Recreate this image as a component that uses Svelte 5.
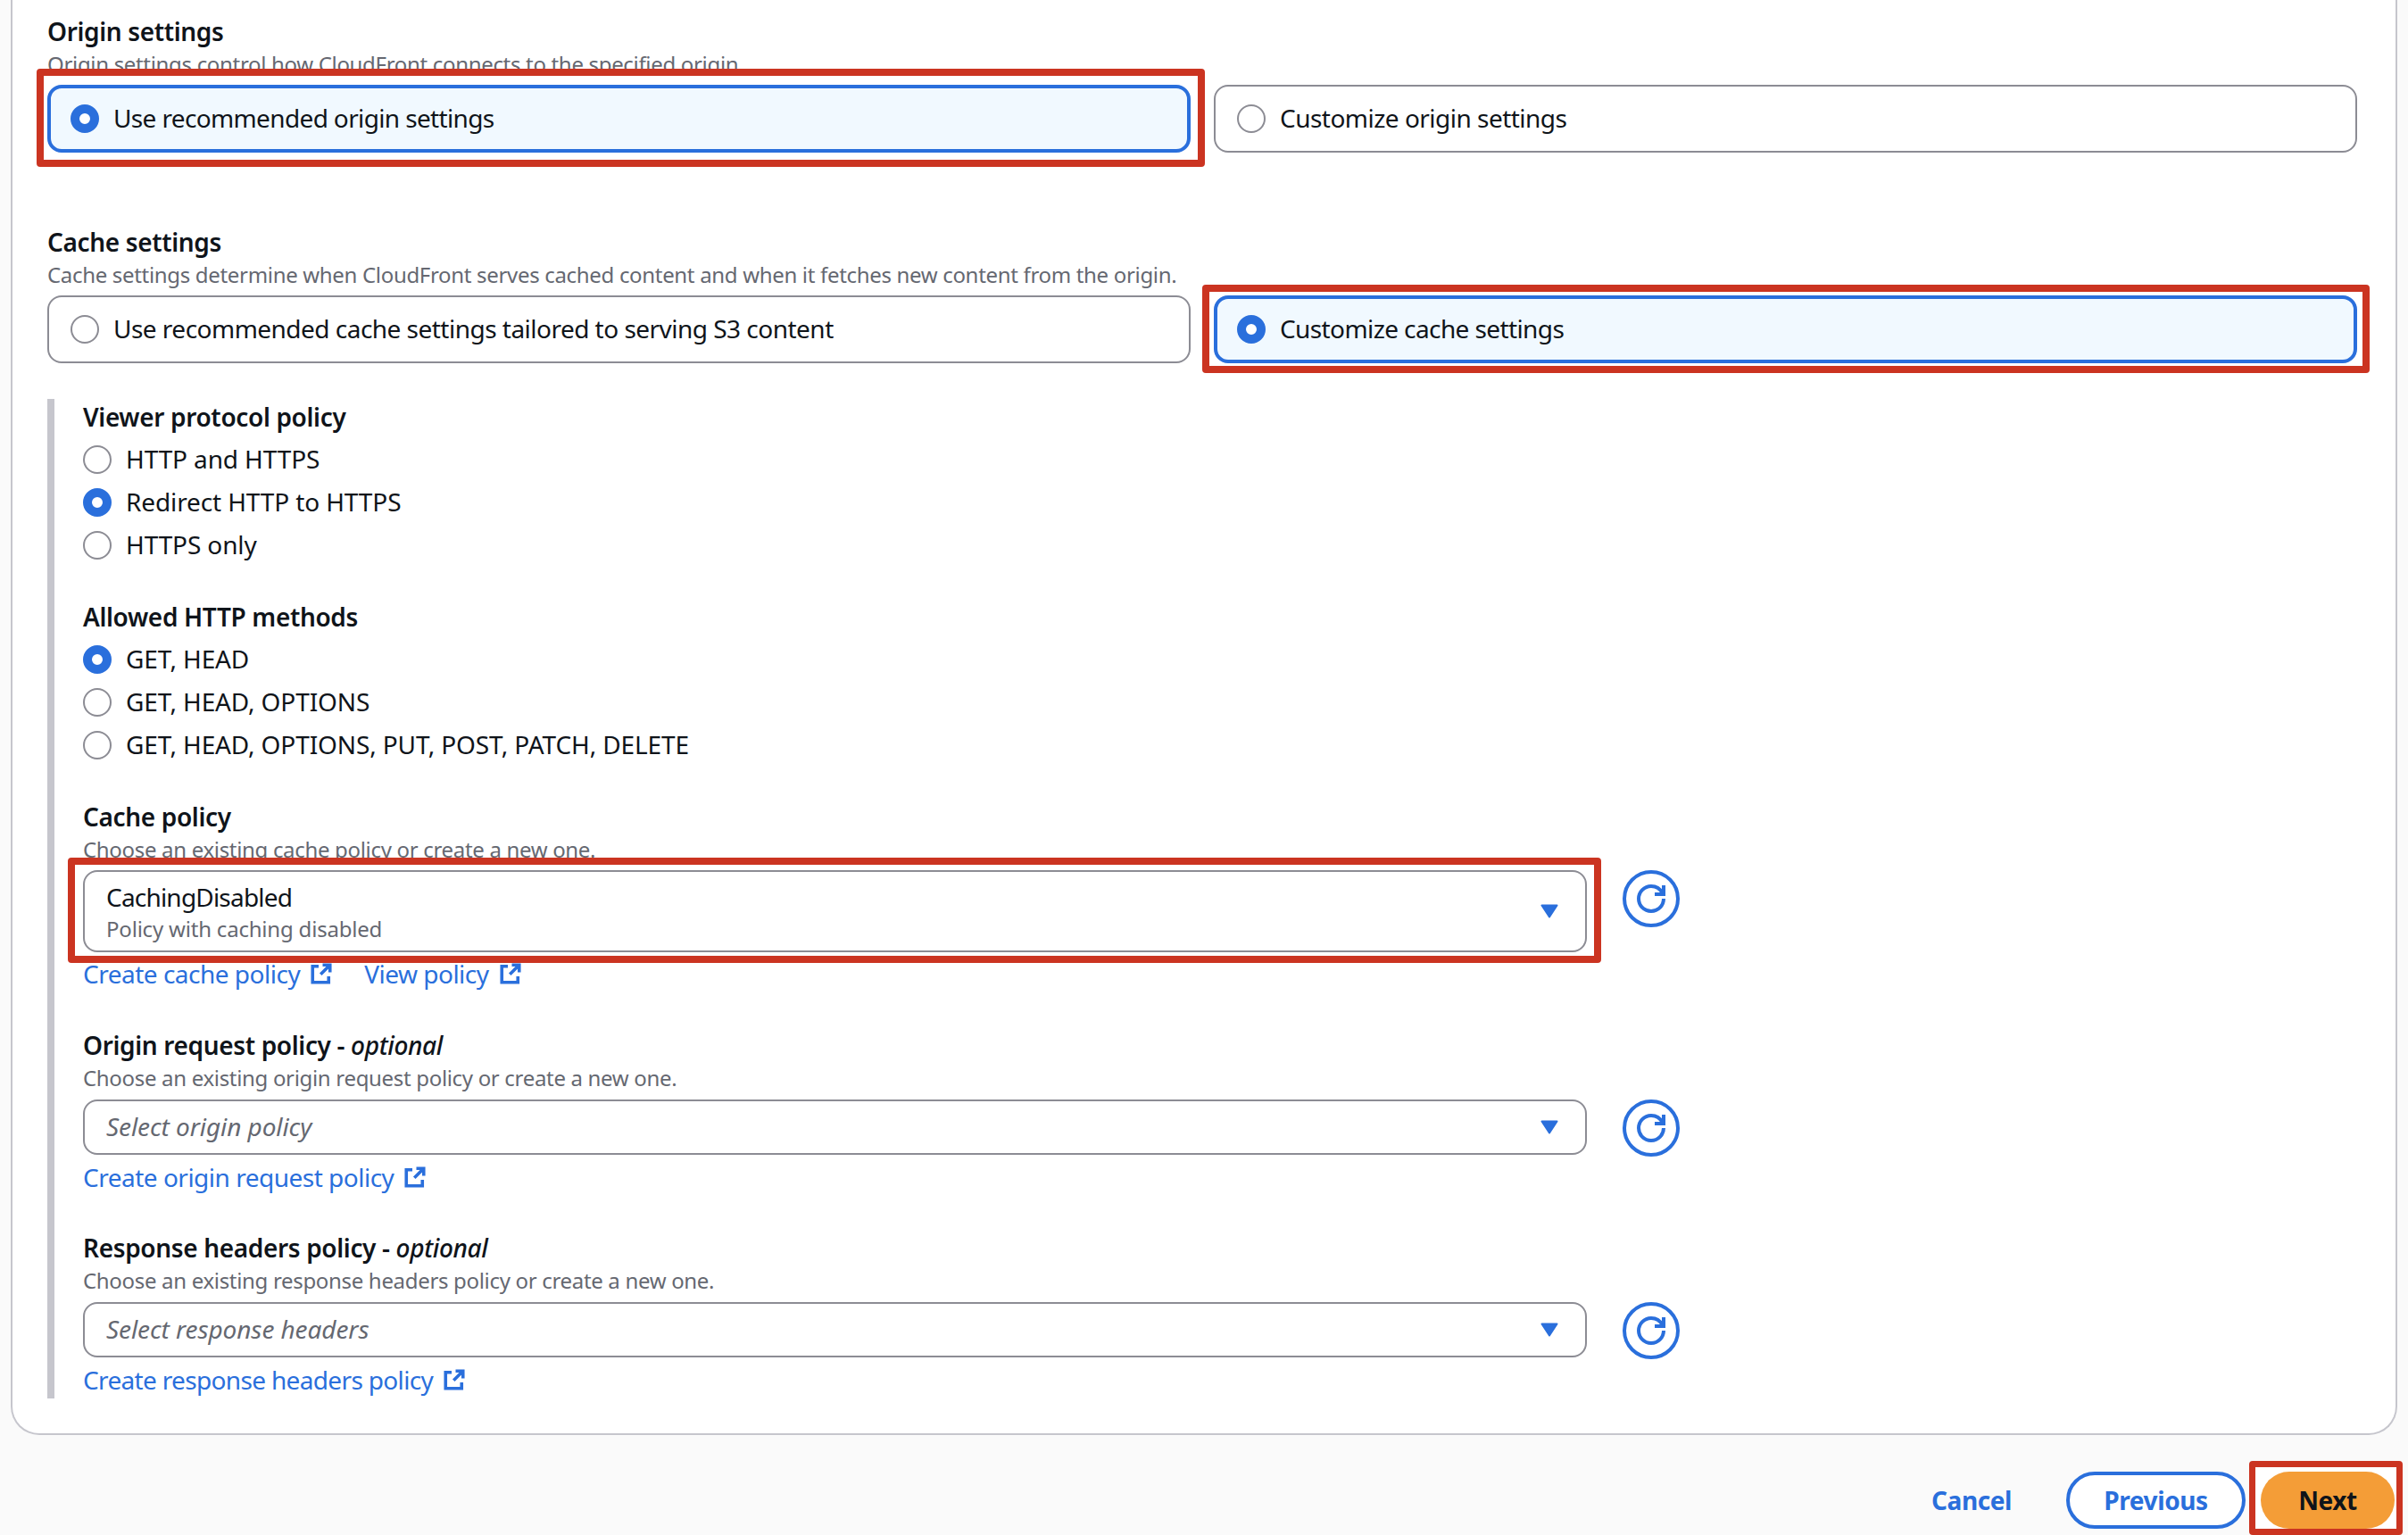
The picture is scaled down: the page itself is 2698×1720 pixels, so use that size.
<script>
  const viewer = [
    { label: 'HTTP and HTTPS' },
    { label: 'Redirect HTTP to HTTPS', checked: true },
    { label: 'HTTPS only' }
  ];
  const methods = [
    { label: 'GET, HEAD', checked: true },
    { label: 'GET, HEAD, OPTIONS' },
    { label: 'GET, HEAD, OPTIONS, PUT, POST, PATCH, DELETE' }
  ];
</script>

{#snippet external()}
  <svg class="ext" viewBox="0 0 16 16" aria-hidden="true">
    <path d="M14.5 7V1.5H9M14.5 1.5 7.5 8.5M6 2.5H1.5V14.5h12V10" />
  </svg>
{/snippet}

{#snippet refresh()}
  <button class="refresh" aria-label="Refresh">
    <svg viewBox="0 0 16 16" aria-hidden="true">
      <path d="M15 8c0 3.87-3.13 7-7 7s-7-3.13-7-7 3.13-7 7-7c2.79 0 5.2 1.63 6.33 4" />
      <path d="M15 .5v5h-5" />
    </svg>
  </button>
{/snippet}

{#snippet caret()}
  <svg class="caret" viewBox="0 0 20 16" aria-hidden="true"><path d="M1.5 1.5h17L10 14.5z" /></svg>
{/snippet}

<div class="page">
  <section class="panel">
    <h3 class="title first">Origin settings</h3>
    <p class="desc">Origin settings control how CloudFront connects to the specified origin.</p>
    <div class="tiles">
      <div class="mark mark-origin">
        <label class="tile on"><input type="radio" name="origin" checked /><span>Use recommended origin settings</span></label>
      </div>
      <label class="tile"><input type="radio" name="origin" /><span>Customize origin settings</span></label>
    </div>

    <h3 class="title cache">Cache settings</h3>
    <p class="desc">Cache settings determine when CloudFront serves cached content and when it fetches new content from the origin.</p>
    <div class="tiles">
      <label class="tile"><input type="radio" name="cache" /><span>Use recommended cache settings tailored to serving S3 content</span></label>
      <div class="mark mark-cache">
        <label class="tile on"><input type="radio" name="cache" checked /><span>Customize cache settings</span></label>
      </div>
    </div>

    <div class="nested">
      <h4 class="title">Viewer protocol policy</h4>
      <div class="radios">
        {#each viewer as r}
          <label class="radio"><input type="radio" name="viewer" checked={r.checked} /><span>{r.label}</span></label>
        {/each}
      </div>

      <h4 class="title methods">Allowed HTTP methods</h4>
      <div class="radios">
        {#each methods as r}
          <label class="radio"><input type="radio" name="methods" checked={r.checked} /><span>{r.label}</span></label>
        {/each}
      </div>

      <h4 class="title policy">Cache policy</h4>
      <p class="desc">Choose an existing cache policy or create a new one.</p>
      <div class="field">
        <div class="mark mark-select">
          <div class="select tall">
            <div class="value">
              <span class="main">CachingDisabled</span>
              <span class="sub">Policy with caching disabled</span>
            </div>
            {@render caret()}
          </div>
        </div>
        {@render refresh()}
      </div>
      <div class="links">
        <a href="#cache">Create cache policy {@render external()}</a>
        <a href="#view">View policy {@render external()}</a>
      </div>

      <h4 class="title opt">Origin request policy - <em>optional</em></h4>
      <p class="desc">Choose an existing origin request policy or create a new one.</p>
      <div class="field short">
        <div class="select"><span class="placeholder">Select origin policy</span>{@render caret()}</div>
        {@render refresh()}
      </div>
      <div class="links">
        <a href="#origin">Create origin request policy {@render external()}</a>
      </div>

      <h4 class="title opt2">Response headers policy - <em>optional</em></h4>
      <p class="desc">Choose an existing response headers policy or create a new one.</p>
      <div class="field short">
        <div class="select"><span class="placeholder">Select response headers</span>{@render caret()}</div>
        {@render refresh()}
      </div>
      <div class="links">
        <a class="tight" href="#response">Create response headers policy {@render external()}</a>
      </div>
    </div>
  </section>

  <footer class="actions">
    <button class="link">Cancel</button>
    <button class="normal">Previous</button>
    <div class="mark mark-next"><button class="primary">Next</button></div>
  </footer>
</div>

<style>
  :global(body) {
    margin: 0;
    background: #fafafa;
  }
  .page {
    width: 2698px;
    height: 1720px;
    overflow: hidden;
    font-family: "Noto Sans", "Open Sans", sans-serif;
    color: #0f141a;
    font-size: 28px;
    box-sizing: border-box;
    padding: 0 12px;
  }
  .panel {
    box-sizing: border-box;
    height: 1608px;
    background: #fff;
    border: 2px solid #c6c6cd;
    border-top: 0;
    border-radius: 0 0 32px 32px;
    padding: 18px 42px 0 39px;
  }
  .title {
    margin: 0 0 2px;
    font-size: 28px;
    line-height: 34px;
    font-weight: 600;
    letter-spacing: -0.35px;
  }
  .title em {
    font-weight: 500;
  }
  .title.cache { margin-top: 83px; }
  .title.methods { margin-top: 39px; }
  .title.policy { margin-top: 39px; }
  .title.opt { margin-top: 45px; }
  .title.opt2 { margin-top: 44px; }
  .desc {
    margin: 0 0 5px;
    font-size: 24px;
    line-height: 36px;
    color: #656871;
    letter-spacing: -0.32px;
  }
  .tiles {
    display: grid;
    grid-template-columns: 1281px 1281px;
    gap: 26px;
  }
  .tile {
    box-sizing: border-box;
    display: flex;
    align-items: center;
    gap: 16px;
    height: 76px;
    padding: 0 24px;
    border: 2px solid #8c8c94;
    border-radius: 16px;
    background: #fff;
    letter-spacing: -0.52px;
  }
  .tile.on {
    border: 4px solid #2a6fdc;
    padding: 0 22px;
    background: #f1f9ff;
  }
  .tile span,
  .radio span {
    padding-bottom: 2px;
  }
  .mark-origin .tile { letter-spacing: -0.64px; }
  .mark-cache .tile { letter-spacing: -0.6px; }
  input[type="radio"] {
    appearance: none;
    box-sizing: border-box;
    flex: none;
    width: 32px;
    height: 32px;
    margin: 0;
    border: 2px solid #8c8c94;
    border-radius: 50%;
    background: #fff;
  }
  input[type="radio"]:checked {
    border: 10px solid #2a6fdc;
  }
  .mark {
    position: relative;
  }
  .mark::before {
    content: "";
    position: absolute;
    box-sizing: border-box;
    border: 8px solid #cb3421;
    border-radius: 4px;
    background: #fff;
  }
  .mark > * {
    position: relative;
  }
  .mark-origin::before { inset: -18px -16px -16px -12px; }
  .mark-cache::before { inset: -12px -14px -11px -13px; }
  .mark-select::before { inset: -14px -16px -12px -17px; }
  .mark-next::before { inset: -12px -9px -7px -13px; border-width: 7px; }
  .nested {
    margin-top: 40px;
    height: 1120px;
    box-sizing: border-box;
    border-left: 8px solid #c6c6cd;
    padding: 3px 0 0 32px;
  }
  .radios {
    display: flex;
    flex-direction: column;
    margin-top: 7px;
  }
  .radio {
    display: flex;
    align-items: center;
    gap: 16px;
    height: 48px;
    letter-spacing: -0.12px;
  }
  .field {
    display: grid;
    grid-template-columns: 1685px 64px;
    gap: 40px;
    align-items: start;
  }
  .field.short {
    margin-top: 6px;
  }
  .select {
    box-sizing: border-box;
    display: flex;
    align-items: center;
    justify-content: space-between;
    height: 62px;
    padding: 0 30px 0 24px;
    border: 2px solid #8c8c94;
    border-radius: 16px;
    background: #fff;
  }
  .select.tall {
    height: 92px;
  }
  .value {
    display: flex;
    flex-direction: column;
    padding-top: 2px;
  }
  .main {
    line-height: 36px;
    letter-spacing: -0.8px;
  }
  .sub {
    font-size: 24px;
    line-height: 34px;
    color: #656871;
    letter-spacing: -0.2px;
    padding-top: 1px;
  }
  .placeholder {
    font-style: italic;
    color: #656871;
    letter-spacing: -0.08px;
    padding-bottom: 2px;
  }
  .caret {
    width: 20px;
    height: 16px;
    flex: none;
  }
  .caret path {
    fill: #2a6fdc;
    stroke: #2a6fdc;
    stroke-width: 2;
    stroke-linejoin: round;
  }
  .refresh {
    box-sizing: border-box;
    width: 64px;
    height: 64px;
    padding: 0;
    display: flex;
    align-items: center;
    justify-content: center;
    background: #fff;
    border: 4px solid #2a6fdc;
    border-radius: 50%;
  }
  .refresh svg {
    width: 32px;
    height: 32px;
    fill: none;
    stroke: #2a6fdc;
    stroke-width: 2;
  }
  .links {
    display: flex;
    gap: 36px;
    margin-top: 6px;
    line-height: 36px;
    letter-spacing: -0.5px;
  }
  .short + .links {
    margin-top: 5px;
  }
  a {
    color: #2a6fdc;
    text-decoration: none;
    display: inline-flex;
    align-items: center;
    gap: 12px;
  }
  a.tight {
    letter-spacing: -0.66px;
  }
  .ext {
    width: 24px;
    height: 24px;
    fill: none;
    stroke: #2a6fdc;
    stroke-width: 2.4;
  }
  .actions {
    display: flex;
    justify-content: flex-end;
    align-items: center;
    margin-top: 41px;
    padding-right: 3px;
  }
  .actions button {
    font: inherit;
    font-weight: 700;
    height: 64px;
    border-radius: 32px;
    box-sizing: border-box;
    letter-spacing: -0.4px;
  }
  .link {
    background: none;
    border: 0;
    color: #2a6fdc;
    padding: 0;
    margin-right: 61px;
  }
  .normal {
    width: 201px;
    background: #fff;
    border: 4px solid #2a6fdc;
    color: #2a6fdc;
    margin-right: 17px;
  }
  .primary {
    width: 150px;
    background: #f49d37;
    border: 0;
    color: #0f141a;
  }
</style>
